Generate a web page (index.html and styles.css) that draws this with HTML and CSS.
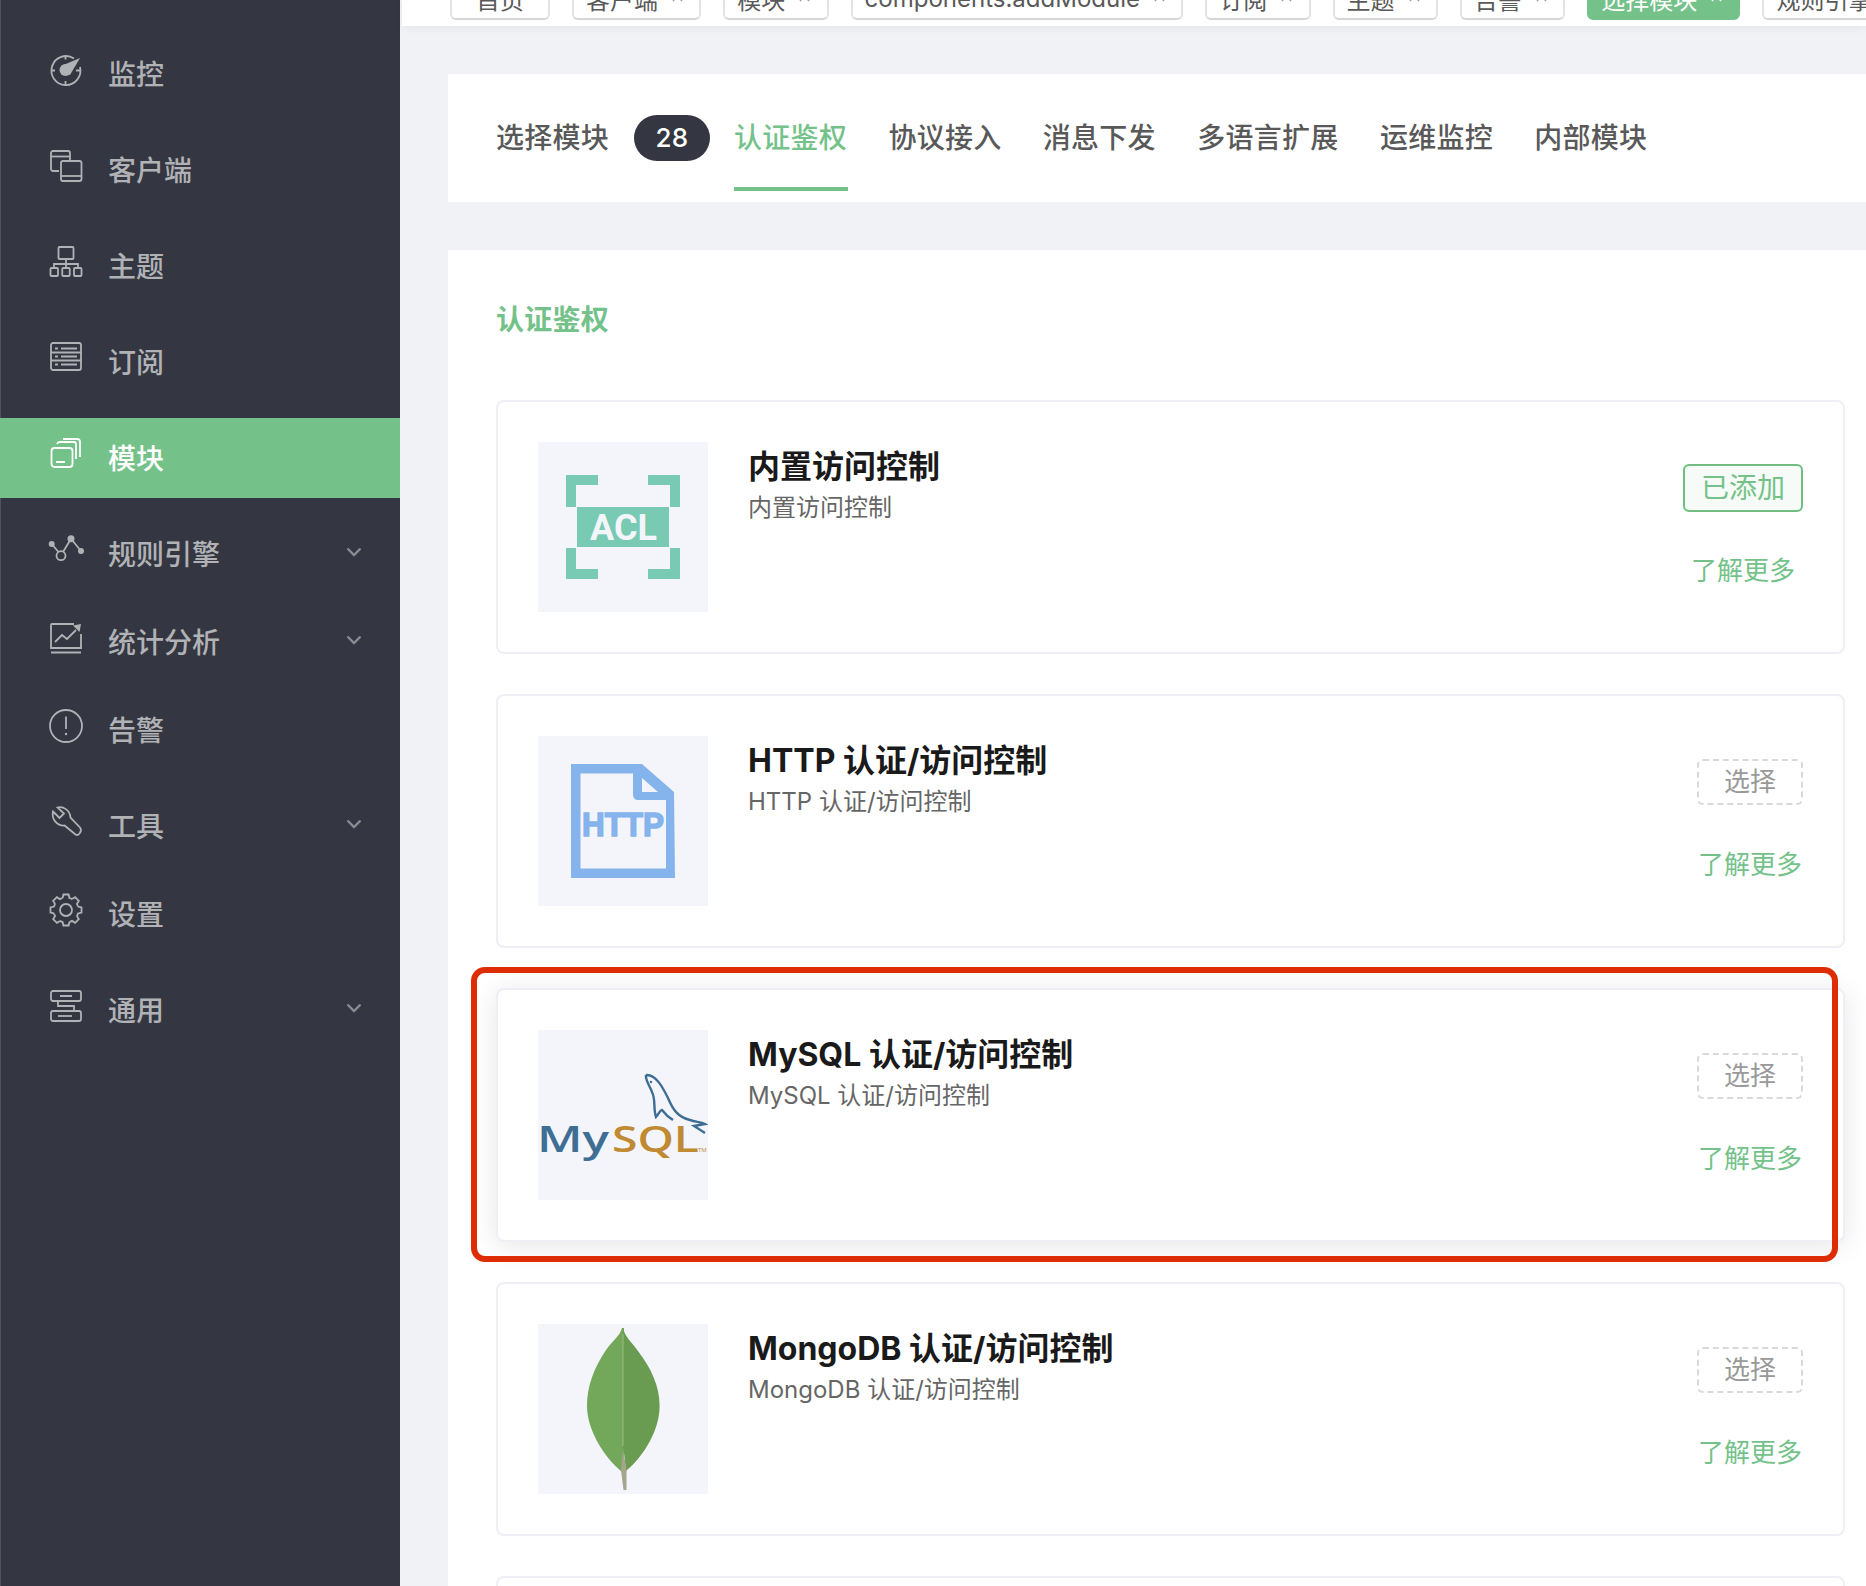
FILE: index.html
```html
<!DOCTYPE html>
<html lang="zh-CN">
<head>
    <meta charset="UTF-8">
    <title>选择模块</title>
    <link rel="stylesheet" href="styles.css">
</head>
<body>
    <aside class="sidebar">
        <a class="nav-item">
            <svg class="nav-icon" viewBox="0 0 32 32"><path d="M24 4.500A14.500 14.500 0 1 0 30 13"/><path d="M15.500 1.500v4M1 16.500h4M26 16.500h4.500M15.500 27v4.500"/><circle class="solid" cx="15.500" cy="16" r="6"/><path class="solid" d="M11 12L30 4L20 21Z"/></svg>
            <span>监控</span>
        </a>
        <a class="nav-item">
            <svg class="nav-icon" viewBox="0 0 32 32"><path d="M9 21H3a2 2 0 0 1-2-2V3a2 2 0 0 1 2-2h15a2 2 0 0 1 2 2v7"/><path d="M1 6.500h19"/><rect x="11" y="11" width="20.500" height="20" rx="2"/><path d="M11 26h20.500"/></svg>
            <span>客户端</span>
        </a>
        <a class="nav-item">
            <svg class="nav-icon" viewBox="0 0 32 32"><rect x="8.500" y="1" width="15" height="12" rx="1"/><path d="M16 13v5M4 22v-4h24v4M16 18v4"/><rect x="0.500" y="22" width="7.500" height="8" rx="1"/><rect x="12.250" y="22" width="7.500" height="8" rx="1"/><rect x="24" y="22" width="7.500" height="8" rx="1"/></svg>
            <span>主题</span>
        </a>
        <a class="nav-item">
            <svg class="nav-icon" viewBox="0 0 32 32"><rect x="1" y="1" width="30" height="27" rx="2"/><path d="M5 6.500h3M11 6.500h16M5 14.500h3M11 14.500h16M5 22.500h3M11 22.500h16M1 10.500h30M1 18.500h30"/></svg>
            <span>订阅</span>
        </a>
        <a class="nav-item active">
            <svg class="nav-icon" viewBox="0 0 32 32"><rect x="1.500" y="10" width="21" height="19" rx="3"/><path d="M6 24h9M7 6a3 3 0 0 1 3-2h14a2 2 0 0 1 2 2v15M13 1h14a3 3 0 0 1 3 3v15"/></svg>
            <span>模块</span>
        </a>
        <a class="nav-item sub">
            <svg class="nav-icon" viewBox="0 0 32 32"><path d="M1.700 10L8.500 18M13 18L21 4.700L31 17"/><circle cx="11" cy="21.700" r="4.500"/><circle class="solid" cx="1.700" cy="10" r="3"/><circle class="solid" cx="21" cy="4.700" r="3.500"/><circle class="solid" cx="31" cy="17" r="3"/></svg>
            <span>规则引擎</span>
            <svg class="chevron" viewBox="0 0 16 10"><path d="M1.500 1.500L8 8l6.500-6.500"/></svg>
        </a>
        <a class="nav-item sub">
            <svg class="nav-icon" viewBox="0 0 32 32"><path d="M24 2H2a1 1 0 0 0-1 1v23h30V12M1 30.500h30M5 20l7-7 5 4 9-9"/><path class="solid" d="M23 3.500L31 2L29.500 10Z"/></svg>
            <span>统计分析</span>
            <svg class="chevron" viewBox="0 0 16 10"><path d="M1.500 1.500L8 8l6.500-6.500"/></svg>
        </a>
        <a class="nav-item">
            <svg class="nav-icon" viewBox="0 0 32 32"><circle cx="16" cy="16" r="16"/><path d="M16 6.500v12.500"/><circle class="solid" cx="16" cy="24" r="1.200"/></svg>
            <span>告警</span>
        </a>
        <a class="nav-item sub">
            <svg class="nav-icon" viewBox="0 0 32 32"><path d="M3 5.500L9.500 12L14 7.500L7.500 1.500C13 0 20 4 20.500 11.500L30 21.500C32.500 24.500 29 30.500 25.500 28.500L14.500 19.500C8 20 1 14 3 5.500Z"/></svg>
            <span>工具</span>
            <svg class="chevron" viewBox="0 0 16 10"><path d="M1.500 1.500L8 8l6.500-6.500"/></svg>
        </a>
        <a class="nav-item">
            <svg class="nav-icon" viewBox="-16 -16 32 32">
                <defs><path id="gear-tooth" d="M-3.400 -12L-2.600 -15.500H2.600L3.400 -12A12.500 12.500 0 0 1 6.080 -10.890"/></defs>
                <use href="#gear-tooth"/><use href="#gear-tooth" transform="rotate(45)"/><use href="#gear-tooth" transform="rotate(90)"/><use href="#gear-tooth" transform="rotate(135)"/>
                <use href="#gear-tooth" transform="rotate(180)"/><use href="#gear-tooth" transform="rotate(225)"/><use href="#gear-tooth" transform="rotate(270)"/><use href="#gear-tooth" transform="rotate(315)"/>
                <circle r="6"/>
            </svg>
            <span>设置</span>
        </a>
        <a class="nav-item sub">
            <svg class="nav-icon" viewBox="0 0 32 32"><rect x="1" y="1" width="30" height="10" rx="2"/><path d="M10 6h12M8 11v5h16v5"/><rect x="1" y="21" width="30" height="10" rx="2"/><path d="M8 26h14"/></svg>
            <span>通用</span>
            <svg class="chevron" viewBox="0 0 16 10"><path d="M1.500 1.500L8 8l6.500-6.500"/></svg>
        </a>
    </aside>

    <main class="main">
        <div class="tag-bar">
            <a class="tag tag-home">首页</a>
            <a class="tag">客户端<svg class="tag-close" viewBox="0 0 12 12"><path d="M1 1l10 10M11 1L1 11"/></svg></a>
            <a class="tag">模块<svg class="tag-close" viewBox="0 0 12 12"><path d="M1 1l10 10M11 1L1 11"/></svg></a>
            <a class="tag">components.addModule<svg class="tag-close" viewBox="0 0 12 12"><path d="M1 1l10 10M11 1L1 11"/></svg></a>
            <a class="tag">订阅<svg class="tag-close" viewBox="0 0 12 12"><path d="M1 1l10 10M11 1L1 11"/></svg></a>
            <a class="tag">主题<svg class="tag-close" viewBox="0 0 12 12"><path d="M1 1l10 10M11 1L1 11"/></svg></a>
            <a class="tag">告警<svg class="tag-close" viewBox="0 0 12 12"><path d="M1 1l10 10M11 1L1 11"/></svg></a>
            <a class="tag tag-active">选择模块<svg class="tag-close" viewBox="0 0 12 12"><path d="M1 1l10 10M11 1L1 11"/></svg></a>
            <a class="tag">规则引擎<svg class="tag-close" viewBox="0 0 12 12"><path d="M1 1l10 10M11 1L1 11"/></svg></a>
        </div>

        <section class="tabs-panel">
            <span class="tabs-label">选择模块</span>
            <span class="count">28</span>
            <a class="tab active">认证鉴权</a>
            <a class="tab">协议接入</a>
            <a class="tab">消息下发</a>
            <a class="tab">多语言扩展</a>
            <a class="tab">运维监控</a>
            <a class="tab">内部模块</a>
        </section>

        <section class="modules-panel">
            <h2 class="section-title">认证鉴权</h2>

            <article class="card">
                <svg class="logo" viewBox="0 0 170 170">
                    <path class="acl" d="M28 33h32v10H38v22H28zM110 33h32v32h-10V43h-22zM28 106h10v21h22v10H28zM132 106h10v31h-32v-10h22zM39 65h92v40H39z"/>
                    <text class="acl-text" x="85.500" y="98" text-anchor="middle">ACL</text>
                </svg>
                <div class="card-body">
                    <h3 class="card-title">内置访问控制</h3>
                    <p class="card-desc">内置访问控制</p>
                </div>
                <div class="actions">
                    <a class="btn btn-added">已添加</a>
                    <a class="more">了解更多</a>
                </div>
            </article>

            <article class="card">
                <svg class="logo" viewBox="0 0 170 170">
                    <path class="http" fill-rule="evenodd" d="M33 28H104L136 56L137 142H33ZM42.500 37.500V132.500H128V64H100Q95 64 95 58V37.500ZM104 42V56H120Z"/>
                    <text class="http-text" x="44" y="100" textLength="82" lengthAdjust="spacingAndGlyphs">HTTP</text>
                </svg>
                <div class="card-body">
                    <h3 class="card-title">HTTP 认证/访问控制</h3>
                    <p class="card-desc">HTTP 认证/访问控制</p>
                </div>
                <div class="actions">
                    <a class="btn btn-select">选择</a>
                    <a class="more">了解更多</a>
                </div>
            </article>

            <article class="card card-hover">
                <svg class="logo" viewBox="0 0 170 170">
                    <path class="dolphin" d="M108 45C118 44 125 58 130 68C135 80 140 87 152 90C158 92 163 92 167 94L156 96L167 103M108 45C107 50 112 56 114 62C118 70 115 78 118 87C121 84 122 80 124 80C127 84 130 87 135 90"/>
                    <circle class="dolphin-eye" cx="113" cy="52" r="1.200"/>
                    <text class="mysql-my" x="-1" y="122" textLength="72" lengthAdjust="spacingAndGlyphs">My</text>
                    <text class="mysql-sql" x="74" y="122" textLength="87" lengthAdjust="spacingAndGlyphs">SQL</text>
                    <text class="mysql-tm" x="160" y="122">TM</text>
                </svg>
                <div class="card-body">
                    <h3 class="card-title">MySQL 认证/访问控制</h3>
                    <p class="card-desc">MySQL 认证/访问控制</p>
                </div>
                <div class="actions">
                    <a class="btn btn-select">选择</a>
                    <a class="more">了解更多</a>
                </div>
                <div class="highlight"></div>
            </article>

            <article class="card">
                <svg class="logo" viewBox="0 0 170 170">
                    <path class="leaf-left" d="M84 4C82 12 75 16 68 26C56 44 49 62 49 82C49 105 65 132 84 148L86 148V4Z"/>
                    <path class="leaf-right" d="M85 4C87 13 93 17 100 27C113 44 121.600 62 121.600 82C121.600 106 106 132 88 147L85 120Z"/>
                    <path class="leaf-vein" d="M85 10V122"/>
                    <path class="leaf-stem" d="M85 126L88.500 146L88.500 166H85.500L83 146Z"/>
                </svg>
                <div class="card-body">
                    <h3 class="card-title">MongoDB 认证/访问控制</h3>
                    <p class="card-desc">MongoDB 认证/访问控制</p>
                </div>
                <div class="actions">
                    <a class="btn btn-select">选择</a>
                    <a class="more">了解更多</a>
                </div>
            </article>

            <article class="card card-empty"></article>
        </section>
    </main>
</body>
</html>
```
FILE: styles.css
```css
* {
    box-sizing: border-box;
}
html, body {
    height: 1586px;
    overflow: hidden;
}
body {
    margin: 0;
    display: flex;
    font-family: Inter, "Noto Sans CJK SC", sans-serif;
    background-color: #f0f2f6;
    color: #595959;
}
h2, h3, p {
    margin: 0;
}

/* sidebar */
.sidebar {
    width: 400px;
    flex-shrink: 0;
    padding-top: 34px;
    background-color: #343741;
    box-shadow: inset 1px 0 0 #50525b;
}
.nav-item {
    display: flex;
    align-items: center;
    gap: 26px;
    height: 80px;
    margin-bottom: 16px;
    padding-left: 50px;
    font-size: 28px;
    font-weight: 500;
    color: #b1b2b6;
}
.nav-item span {
    margin-bottom: 2px;
}
.nav-item.sub {
    margin-bottom: 8px;
}
.nav-item.active {
    background-color: #74c28a;
    color: #fff;
}
.nav-icon {
    width: 32px;
    height: 32px;
    margin-bottom: 8px;
    overflow: visible;
    fill: none;
    stroke: currentColor;
    stroke-width: 1.8;
    flex-shrink: 0;
}
.nav-icon .solid {
    fill: currentColor;
    stroke: none;
}
.chevron {
    width: 16px;
    height: 10px;
    margin-left: auto;
    margin-right: 38px;
    margin-bottom: 4px;
    fill: none;
    stroke: #8b8c92;
    stroke-width: 2.4;
}

/* tag bar */
.main {
    flex: 1;
    min-width: 0;
    padding-left: 2px;
}
.tag-bar {
    display: flex;
    align-items: flex-end;
    gap: 22px;
    height: 26px;
    padding: 0 0 6px 48px;
    overflow: hidden;
    background-color: #fff;
    box-shadow: 0 2px 10px rgba(0,0,0,0.06);
    position: relative;
}
.tag {
    display: flex;
    align-items: center;
    flex-shrink: 0;
    height: 44px;
    padding: 0 16.3px 0 12px;
    border: 2px solid #e2e2e2;
    border-bottom-color: #d6d6d6;
    border-radius: 6px;
    font-size: 24px;
    white-space: nowrap;
    background-color: #fff;
    color: #595959;
}
.tag-home {
    padding: 0 24px;
}
.tag-active {
    background-color: #74c28a;
    border-color: #74c28a;
    color: #fff;
}
.tag-close {
    width: 11px;
    height: 11px;
    margin-left: 14px;
    margin-bottom: 4px;
    fill: none;
    stroke: #999;
    stroke-width: 1.5;
}
.tag-active .tag-close {
    stroke: #fff;
}

/* tabs */
.tabs-panel {
    display: flex;
    align-items: flex-start;
    height: 128px;
    margin: 48px 0 0 46px;
    padding-left: 48px;
    background-color: #fff;
    font-size: 28px;
    font-weight: 500;
    line-height: 40px;
    letter-spacing: 0.25px;
}
.tabs-label {
    margin-top: 44px;
    margin-right: 25px;
    width: 113px;
    white-space: nowrap;
}
.count {
    width: 76px;
    height: 46px;
    margin-top: 41px;
    margin-right: 24px;
    border-radius: 23px;
    background-color: #343741;
    color: #fff;
    font-size: 26px;
    line-height: 46px;
    text-align: center;
}
.tab {
    height: 117px;
    margin-right: 40.4px;
    padding: 44px 1px 0 0;
    border-bottom: 4px solid transparent;
    white-space: nowrap;
}
.tab.active {
    color: #74c28a;
    border-bottom-color: #74c28a;
}

/* module list */
.modules-panel {
    margin: 48px 0 0 46px;
    padding: 50px 21px 0 48px;
    height: 1400px;
    background-color: #fff;
}
.section-title {
    margin-bottom: 60px;
    font-size: 28px;
    line-height: 40px;
    font-weight: 700;
    letter-spacing: 0.25px;
    color: #74c28a;
}
.card {
    position: relative;
    display: flex;
    height: 254px;
    margin-bottom: 40px;
    padding: 40px;
    border: 2px solid #edeff5;
    border-radius: 8px;
    background-color: #fff;
}
.card-hover {
    box-shadow: 0 4px 28px rgba(0,0,0,0.1);
}
.highlight {
    position: absolute;
    top: -23px;
    left: -27px;
    right: 5px;
    bottom: -22px;
    border: 6px solid #de2d05;
    border-radius: 14px;
}
.logo {
    width: 170px;
    height: 170px;
    flex-shrink: 0;
    background-color: #f4f5fb;
}
.card-body {
    flex: 1;
    margin-left: 40px;
    padding-top: 3px;
}
.card-title {
    margin-bottom: 2px;
    font-size: 32px;
    line-height: 44px;
    font-weight: 700;
    color: #1a1a1a;
}
.card-desc {
    font-size: 24px;
    line-height: 34px;
    color: #666;
}
.actions {
    display: grid;
    grid-template-rows: 48px 36px;
    row-gap: 41px;
    justify-items: center;
    align-content: start;
    padding-top: 22px;
}
.btn {
    display: block;
    border-radius: 6px;
    text-align: center;
}
.btn-added {
    width: 120px;
    height: 48px;
    border: 2px solid #6fbe80;
    background-color: #f6fbf7;
    color: #74c28a;
    font-size: 28px;
    line-height: 44px;
}
.btn-select {
    width: 106px;
    height: 46px;
    margin-top: 1px;
    border: 2px dashed #d9d9d9;
    color: #999;
    font-size: 26px;
    line-height: 42px;
}
.more {
    font-size: 26px;
    line-height: 36px;
    color: #74c28a;
    white-space: nowrap;
}

/* logos */
.acl {
    fill: #78cab2;
}
.acl-text {
    font-family: Roboto, sans-serif;
    font-weight: 700;
    font-size: 36px;
    fill: #f4f5fb;
}
.http {
    fill: #85b3ec;
}
.http-text {
    font-family: "Liberation Sans", sans-serif;
    font-weight: 700;
    font-size: 34px;
    fill: #85b3ec;
    stroke: #85b3ec;
    stroke-width: 1.6;
}
.dolphin {
    fill: none;
    stroke: #3e6e93;
    stroke-width: 2.4;
}
.dolphin-eye {
    fill: #3e6e93;
}
.mysql-my, .mysql-sql {
    font-family: "Open Sans", sans-serif;
    font-weight: 600;
    font-size: 36px;
}
.mysql-my {
    fill: #3e6e93;
}
.mysql-sql {
    fill: #c08a33;
}
.mysql-tm {
    font-family: "Open Sans", sans-serif;
    font-size: 6px;
    fill: #c08a33;
}
.leaf-left {
    fill: #73a85a;
}
.leaf-right {
    fill: #699c50;
}
.leaf-vein {
    fill: none;
    stroke: #9dbb85;
    stroke-width: 1;
}
.leaf-stem {
    fill: #a6a48b;
}
```
